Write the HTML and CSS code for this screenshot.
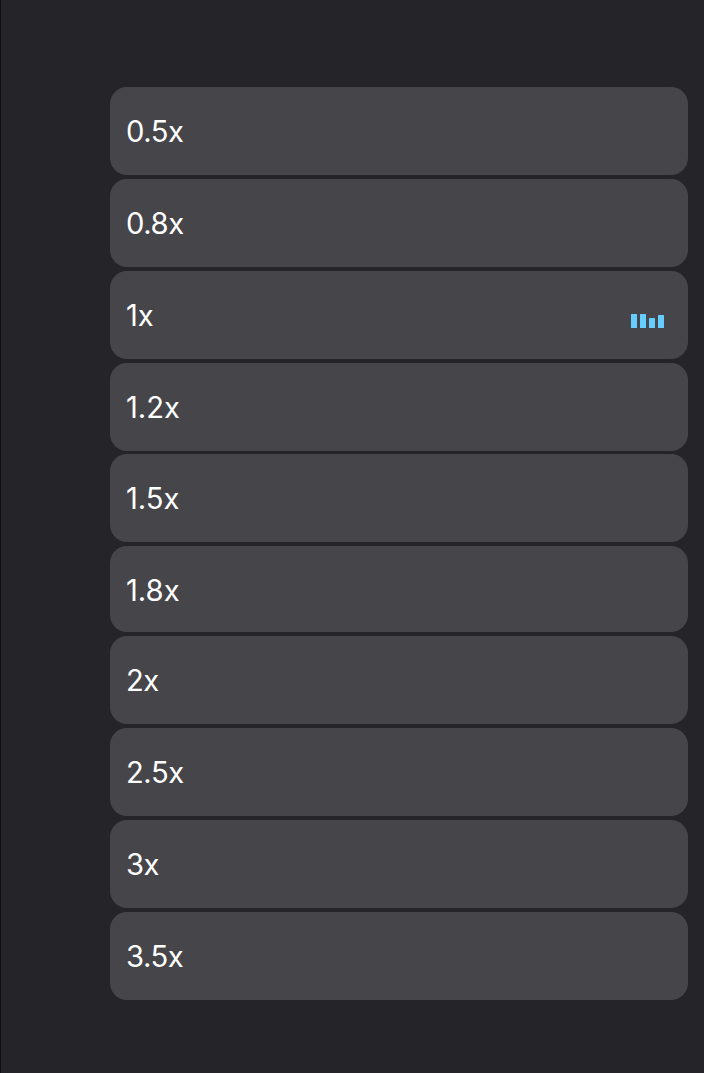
FILE: index.html
```html
<!DOCTYPE html>
<html lang="en">
<head>
<meta charset="utf-8">
<title>Playback speed</title>
<link rel="stylesheet" href="styles.css">
</head>
<body>
<main class="panel">
<ul class="speeds">
<li class="speed">0.5x</li>
<li class="speed">0.8x</li>
<li class="speed wide">1x
<svg class="bars" viewBox="0 0 33 14" aria-hidden="true"><rect x="0" y="0" width="6" height="14" rx=".5"/><rect x="9" y="0" width="6" height="14" rx=".5"/><rect x="18" y="4" width="6" height="10" rx=".5"/><rect x="27" y="1" width="6" height="13" rx=".5"/></svg></li>
<li class="speed wide tight">1.2x</li>
<li class="speed wide">1.5x</li>
<li class="speed wide short">1.8x</li>
<li class="speed">2x</li>
<li class="speed">2.5x</li>
<li class="speed">3x</li>
<li class="speed">3.5x</li>
</ul>
</main>
</body>
</html>
```
FILE: styles.css
```css
* { box-sizing: border-box; }
body { margin: 0; background: #252429; }
.panel { height: 1073px; padding: 87px 16px 0 109px; border-left: 1px solid #111115; }
.speeds { display: flex; flex-direction: column; gap: 4px; margin: 0; padding: 0; list-style: none; }
.speed { display: flex; flex: none; align-items: center; justify-content: space-between; height: 88px; padding: 2px 24px 0 16px; border-radius: 17px; background: #464549; color: #fff; font: 400 29.2px/36px Inter, sans-serif; letter-spacing: -0.45px; }
.wide { letter-spacing: 0; }
.tight { margin-bottom: -1px; }
.short { height: 86px; padding-top: 4px; }
.bars { width: 33px; height: 14px; margin-top: 10px; fill: #64ceff; }
```
